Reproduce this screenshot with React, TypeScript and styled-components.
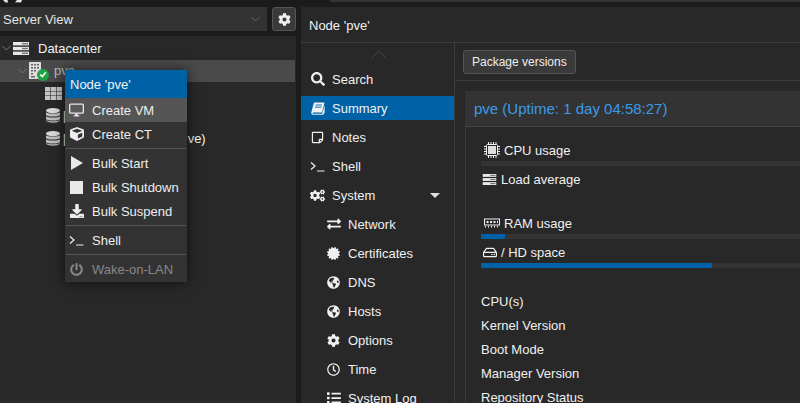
import React from "react";
import styled, { createGlobalStyle } from "styled-components";
import {
  FaSearch, FaRegStickyNote, FaCogs, FaExchangeAlt, FaCertificate, FaGlobeAmericas, FaCog,
  FaRegClock, FaList, FaCube, FaDownload, FaPowerOff, FaRegHdd,
} from "react-icons/fa";

const Global = createGlobalStyle`
  html, body { margin: 0; padding: 0; background: #1b1b1b; overflow: hidden; }
  body { font-family: "Liberation Sans", Arial, sans-serif; font-size: 13px; color: #f2f2f2; }
`;

const Page = styled.div`
  width: 800px; height: 403px; overflow: hidden; position: relative; display: flex; padding-top: 7px; box-sizing: border-box; gap: 5px;
`;
const Sidebar = styled.aside`
  width: 296px; flex: none; display: flex; flex-direction: column;
`;
const SideBar = styled.div`
  height: 24px; display: flex; gap: 5px; margin-bottom: 5px;
`;
const Select = styled.div`
  flex: 1; background: #333; display: flex; align-items: center; justify-content: space-between; padding: 0 7px 0 3px; font-size: 13px; color: #e6e6e6;
`;
const GearButton = styled.div`
  width: 22px; background: #3a3a3a; border: 1px solid #555; border-radius: 3px; display: flex; align-items: center; justify-content: center; color: #f0f0f0;
`;
const Tree = styled.div`
  flex: 1; background: #282828; padding-top: 1px; padding-right: 1px;
`;
const TreeRow = styled.div<{ $indent: number; $selected?: boolean }>`
  height: 22.5px; display: flex; align-items: center; padding-left: ${(p) => p.$indent}px;
  background: ${(p) => (p.$selected ? "#4a4a4a" : "transparent")};
  color: ${(p) => (p.$selected ? "#bbb" : "#f2f2f2")};
`;
const TreeIcon = styled.span<{ $width: number }>`
  width: ${(p) => p.$width}px; height: 16px; display: flex; align-items: center; justify-content: center; position: relative; color: #e6e6e6; flex: none;
`;
const TreeLabel = styled.span<{ $gap: number }>`
  margin-left: ${(p) => p.$gap}px; white-space: nowrap;
`;
const Chevron = styled.svg`
  flex: none;
`;
const ChevronSlot = styled.span`
  width: 11px; flex: none; display: flex; align-items: center;
`;
const Main = styled.main`
  flex: 1; min-width: 0; background: #282828; display: flex; flex-direction: column;
`;
const Header = styled.header`
  height: 36px; flex: none; display: flex; align-items: center; padding: 2px 0 0 8px; box-sizing: border-box; border-bottom: 1px solid #3d3d3d; font-size: 13px;
`;
const Body = styled.div`
  flex: 1; display: flex; min-height: 0;
`;
const Nav = styled.nav`
  width: 153px; flex: none; border-right: 1px solid #3d3d3d; padding-top: 24px; position: relative;
`;
const ScrollUp = styled.svg`
  position: absolute; top: 7px; left: 70px;
`;
const NavItem = styled.div<{ $active?: boolean; $sub?: boolean }>`
  height: 24px; margin-bottom: 5px; display: flex; align-items: center; position: relative;
  padding-left: ${(p) => (p.$sub ? 25 : 9)}px;
  background: ${(p) => (p.$active ? "#0062a6" : "transparent")};
  font-size: 13px; color: #f0f0f0;
`;
const NavIcon = styled.span`
  width: 15px; display: flex; align-items: center; justify-content: center; margin-right: 7px; flex: none; color: #f0f0f0;
`;
const Caret = styled.span`
  position: absolute; right: 14px; top: 10px; width: 0; height: 0; border-left: 5px solid transparent; border-right: 5px solid transparent; border-top: 5px solid #e0e0e0;
`;
const Content = styled.section`
  flex: 1; min-width: 0; display: flex; flex-direction: column;
`;
const Toolbar = styled.div`
  height: 38px; flex: none; box-sizing: border-box; border-bottom: 1px solid #3d3d3d; display: flex; align-items: center; padding: 1px 0 0 8px;
`;
const Button = styled.div`
  height: 24px; box-sizing: border-box; padding: 0 8px; background: #3a3a3a; border: 1px solid #555; border-radius: 3px; display: flex; align-items: center; font-size: 12px; color: #eee;
`;
const Panel = styled.div`
  margin: 10px 0 0 10px; flex: 1; display: flex; flex-direction: column;
`;
const PanelTitle = styled.div`
  height: 35px; flex: none; background: #333; display: flex; align-items: center; padding-left: 9px; font-size: 15px; color: #3c9be8; border-bottom: 1px solid #444;
`;
const PanelBody = styled.div`
  flex: 1; border-left: 1px solid #3d3d3d; padding: 13px 0 0 15px;
`;
const Metric = styled.div<{ $height: number }>`
  height: ${(p) => p.$height}px;
`;
const MetricLabel = styled.div<{ $indent: number; $icon: number }>`
  height: 20px; margin-bottom: 1px; display: flex; align-items: center; font-size: 13px; color: #f0f0f0;
  padding-left: ${(p) => p.$indent}px;
  & > svg { width: ${(p) => p.$icon}px; margin-right: 4px; flex: none; }
`;
const Bar = styled.div`
  height: 5px; background: #333;
`;
const BarFill = styled.div`
  height: 100%; background: #0062a6;
`;
const InfoList = styled.div`
  margin-top: 24px; display: flex; flex-direction: column; gap: 4px;
`;
const InfoRow = styled.div`
  height: 20px; line-height: 20px; font-size: 13px; color: #f0f0f0; white-space: nowrap;
`;
const Menu = styled.div`
  position: absolute; left: 65px; top: 70px; width: 122px; height: 212px; box-sizing: border-box; background: #333; box-shadow: 0 0 12px rgba(0,0,0,.65); z-index: 5;
`;
const MenuTitle = styled.div`
  height: 28px; background: #0062a6; padding-left: 5px; display: flex; align-items: center; font-size: 13px; color: #f2f2f2;
`;
const MenuItem = styled.div<{ $hover?: boolean; $disabled?: boolean }>`
  height: 24px; display: flex; align-items: center; padding-left: 4px; font-size: 13px;
  background: ${(p) => (p.$hover ? "#555" : "transparent")};
  color: ${(p) => (p.$disabled ? "#888" : "#eee")};
`;
const MenuIcon = styled.span`
  width: 15px; display: flex; align-items: center; justify-content: center; margin-right: 8px; flex: none;
`;
const MenuSep = styled.div`
  height: 1px; background: #555; margin: 2px 1px;
`;
const StatusDot = styled.span`
  position: absolute; right: -8px; bottom: -2px; width: 12px; height: 12px; border-radius: 50%; background: #21a244; display: flex; align-items: center; justify-content: center;
`;
const TopStrip = styled.div`
  position: absolute; left: 330px; right: 0; top: 0; height: 2px; background: #333;
`;
const Logo = styled.svg`
  position: absolute; left: 0; top: 0;
`;

const Terminal = () => (
  <svg width="15" height="11" viewBox="0 0 15 11" fill="none" stroke="currentColor" strokeWidth="1.2"><path d="M1 1.5 5 5 1 8.5M7 10h7.5" /></svg>
);
const ChevronDown = ({ color = "#777" }: { color?: string }) => (
  <Chevron width="9" height="6" viewBox="0 0 9 6" fill="none" stroke={color}><path d="M.5 1 4.5 5 8.5 1" /></Chevron>
);
const ServerIcon = ({ w = 16, h = 13 }: { w?: number; h?: number }) => (
  <svg width={w} height={h} viewBox="0 0 16 13">
    <g fill="#e8e8e8"><rect width="16" height="3.4" /><rect y="4.8" width="16" height="3.4" /><rect y="9.6" width="16" height="3.4" /></g>
    <g fill="#777"><rect x="9" y="1" width="6" height="1.4" /><rect x="9" y="5.8" width="6" height="1.4" /><rect x="9" y="10.6" width="6" height="1.4" /></g>
  </svg>
);
const NodeIcon = () => (
  <svg width="12" height="17" viewBox="0 0 12 17">
    <rect width="12" height="17" fill="#ddd" />
    <g fill="#666">
      <rect x="2" y="2" width="2" height="1.5" /><rect x="5" y="2" width="2" height="1.5" /><rect x="8" y="2" width="2" height="1.5" />
      <rect x="2" y="5" width="2" height="1.5" /><rect x="5" y="5" width="2" height="1.5" /><rect x="8" y="5" width="2" height="1.5" />
      <rect x="2" y="8" width="2" height="1.5" /><rect x="5" y="8" width="2" height="1.5" />
      <rect x="2" y="11" width="2" height="1.5" /><rect x="2" y="14" width="4" height="1.5" />
    </g>
  </svg>
);
const GridIcon = () => (
  <svg width="17" height="13" viewBox="0 0 17 13">
    <g fill="#c4c4c4">
      {[0, 4.5, 9].map((y) => [0, 6, 12].map((x) => <rect key={`${x}-${y}`} x={x} y={y} width="5.4" height="4" />))}
    </g>
  </svg>
);
const DatabaseIcon = () => (
  <svg width="14" height="15" viewBox="0 0 14 15">
    <ellipse cx="7" cy="2.6" rx="7" ry="2.6" fill="#d8d8d8" />
    <path d="M0 4.2C1 6 13 6 14 4.2V7C13 9 1 9 0 7Z" fill="#bdbdbd" />
    <path d="M0 8.2C1 10 13 10 14 8.2V11C13 13 1 13 0 11Z" fill="#bdbdbd" />
    <path d="M0 12C1 13.6 13 13.6 14 12V12.6C13 15.6 1 15.6 0 12.6Z" fill="#a8a8a8" />
  </svg>
);
const BookIcon = () => (
  <svg width="14" height="13" viewBox="0 0 14 13">
    <path d="M3 .5H13.5L11 10.5H2.2C1.4 10.5 1.4 11.8 2.2 11.8H11.2L13.6 3V11L12 12.8H2C.4 12.8 0 11.2.4 9.8Z" fill="#f2f2f2" />
    <path d="M4.6 3H11M4 5.2H10.4" stroke="#0062a6" strokeWidth=".9" />
  </svg>
);
const MonitorIcon = () => (
  <svg width="16" height="14" viewBox="0 0 16 14">
    <rect x=".7" y=".7" width="14.6" height="9.6" rx="1" fill="#5a5a5a" stroke="#e8e8e8" strokeWidth="1.4" />
    <path d="M6.5 11h3v1.5h1.5V14H5v-1.5h1.5Z" fill="#e8e8e8" />
  </svg>
);
const PlayIcon = () => (
  <svg width="12" height="14" viewBox="0 0 12 14"><path d="M0 0 12 7 0 14Z" fill="#e8e8e8" /></svg>
);
const StopIcon = () => (
  <svg width="13" height="13" viewBox="0 0 13 13"><rect width="13" height="13" fill="#e8e8e8" /></svg>
);
const ChipIcon = () => (
  <svg width="16" height="16" viewBox="0 0 16 16" fill="none" stroke="#f0f0f0">
    <rect x="2.5" y="2.5" width="11" height="11" rx="1" />
    <rect x="4" y="4" width="8" height="8" fill="#ddd" stroke="none" />
    <path d="M4.5 0v2M7 0v2M9.5 0v2M12 0v2M4.5 14v2M7 14v2M9.5 14v2M12 14v2M0 4.5h2M0 7h2M0 9.5h2M0 12h2M14 4.5h2M14 7h2M14 9.5h2M14 12h2" />
  </svg>
);
const RamIcon = () => (
  <svg width="16" height="10" viewBox="0 0 16 10">
    <rect x=".5" y="1" width="15" height="6" fill="none" stroke="#f0f0f0" />
    <path d="M2.5 3h2v2h-2ZM6 3h2v2H6ZM9.5 3h2v2h-2ZM13 3h1v2h-1Z" fill="#f0f0f0" />
    <path d="M1 8h1v1.5H1ZM4 8h1v1.5H4ZM7 8h1v1.5H7ZM10 8h1v1.5h-1ZM13 8h1v1.5h-1Z" fill="#f0f0f0" />
  </svg>
);

const sys: [React.ReactNode, string][] = [
  [<FaExchangeAlt size={14} />, "Network"],
  [<FaCertificate size={13} />, "Certificates"],
  [<FaGlobeAmericas size={13} />, "DNS"],
  [<FaGlobeAmericas size={13} />, "Hosts"],
  [<FaCog size={13} />, "Options"],
  [<FaRegClock size={13} />, "Time"],
  [<FaList size={14} />, "System Log"],
];

export default function App() {
  return (
    <Page>
      <Global />
      <TopStrip />
      <Logo width="30" height="3" viewBox="0 0 30 3" fill="#e8e8e8"><path d="M3 0H7.5L8 2.4 5.5 2.6ZM15 2.6 17 0H22L21 2.6 18 2.2Z" /></Logo>
      <Sidebar>
        <SideBar>
          <Select>Server View<ChevronDown color="#666" /></Select>
          <GearButton><FaCog size={13} /></GearButton>
        </SideBar>
        <Tree>
          <TreeRow $indent={2}><ChevronSlot><ChevronDown /></ChevronSlot><TreeIcon $width={16}><ServerIcon /></TreeIcon><TreeLabel $gap={9}>Datacenter</TreeLabel></TreeRow>
          <TreeRow $indent={18} $selected><ChevronSlot><ChevronDown /></ChevronSlot><TreeIcon $width={12}><NodeIcon /><StatusDot><svg width="8" height="7" viewBox="0 0 7 6" fill="none" stroke="#fff" strokeWidth="1.3"><path d="M1 3 2.8 4.8 6 1" /></svg></StatusDot></TreeIcon><TreeLabel $gap={13}>pve</TreeLabel></TreeRow>
          <TreeRow $indent={45}><TreeIcon $width={17}><GridIcon /></TreeIcon></TreeRow>
          <TreeRow $indent={46}><TreeIcon $width={14}><DatabaseIcon /></TreeIcon><TreeLabel $gap={3}>[</TreeLabel></TreeRow>
          <TreeRow $indent={46}><TreeIcon $width={14}><DatabaseIcon /></TreeIcon><TreeLabel $gap={3}>[</TreeLabel><TreeLabel $gap={121}>ve)</TreeLabel></TreeRow>
        </Tree>
      </Sidebar>
      <Main>
        <Header>Node 'pve'</Header>
        <Body>
          <Nav>
            <ScrollUp width="16" height="9" viewBox="0 0 16 9" fill="none" stroke="#444"><path d="M0.5 8.5 8 1 15.5 8.5" /></ScrollUp>
            <NavItem><NavIcon><FaSearch size={14} /></NavIcon>Search</NavItem>
            <NavItem $active><NavIcon><BookIcon /></NavIcon>Summary</NavItem>
            <NavItem><NavIcon><FaRegStickyNote size={13} /></NavIcon>Notes</NavItem>
            <NavItem><NavIcon><Terminal /></NavIcon>Shell</NavItem>
            <NavItem><NavIcon><FaCogs size={15} /></NavIcon>System<Caret /></NavItem>
            {sys.map(([icon, label]) => (
              <NavItem $sub key={label}><NavIcon>{icon}</NavIcon>{label}</NavItem>
            ))}
          </Nav>
          <Content>
            <Toolbar><Button>Package versions</Button></Toolbar>
            <Panel>
              <PanelTitle>pve (Uptime: 1 day 04:58:27)</PanelTitle>
              <PanelBody>
                <Metric $height={29}><MetricLabel $indent={3} $icon={16}><ChipIcon />CPU usage</MetricLabel><Bar /></Metric>
                <Metric $height={44}><MetricLabel $indent={1} $icon={15}><ServerIcon w={15} h={11} />Load average</MetricLabel></Metric>
                <Metric $height={29}><MetricLabel $indent={3} $icon={16}><RamIcon />RAM usage</MetricLabel><Bar><BarFill style={{ width: "7.5%" }} /></Bar></Metric>
                <Metric $height={26}><MetricLabel $indent={2} $icon={14}><FaRegHdd size={13} />/ HD space</MetricLabel><Bar><BarFill style={{ width: "72.3%" }} /></Bar></Metric>
                <InfoList>
                  <InfoRow>CPU(s)</InfoRow>
                  <InfoRow>Kernel Version</InfoRow>
                  <InfoRow>Boot Mode</InfoRow>
                  <InfoRow>Manager Version</InfoRow>
                  <InfoRow>Repository Status</InfoRow>
                </InfoList>
              </PanelBody>
            </Panel>
          </Content>
        </Body>
      </Main>
      <Menu>
        <MenuTitle>Node 'pve'</MenuTitle>
        <MenuItem $hover><MenuIcon><MonitorIcon /></MenuIcon>Create VM</MenuItem>
        <MenuItem><MenuIcon><FaCube size={14} /></MenuIcon>Create CT</MenuItem>
        <MenuSep />
        <MenuItem><MenuIcon><PlayIcon /></MenuIcon>Bulk Start</MenuItem>
        <MenuItem><MenuIcon><StopIcon /></MenuIcon>Bulk Shutdown</MenuItem>
        <MenuItem><MenuIcon><FaDownload size={14} /></MenuIcon>Bulk Suspend</MenuItem>
        <MenuSep />
        <MenuItem><MenuIcon><Terminal /></MenuIcon>Shell</MenuItem>
        <MenuSep />
        <MenuItem $disabled><MenuIcon><FaPowerOff size={13} /></MenuIcon>Wake-on-LAN</MenuItem>
      </Menu>
    </Page>
  );
}
